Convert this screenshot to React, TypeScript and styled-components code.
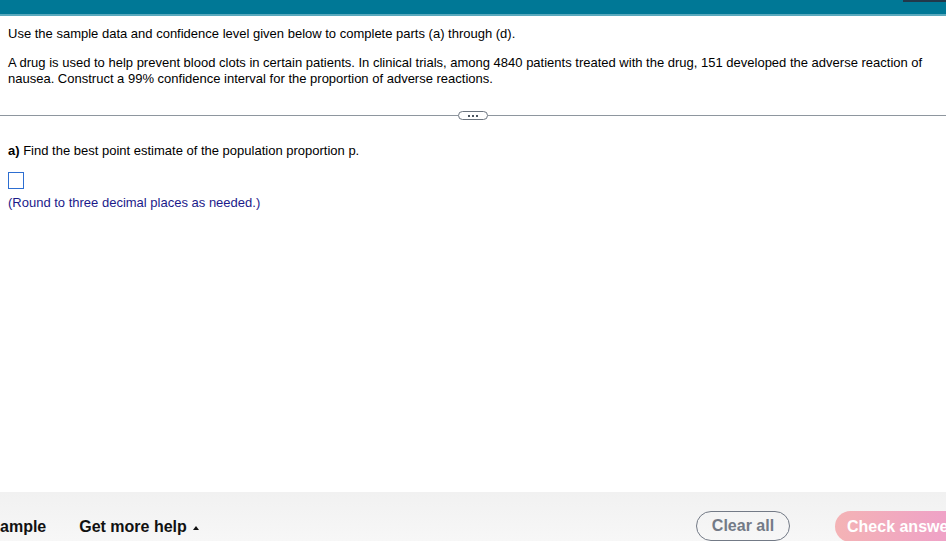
import styled, { createGlobalStyle } from "styled-components";

const Global = createGlobalStyle`
  html, body {
    margin: 0;
    padding: 0;
    background: #fff;
    font-family: "Liberation Sans", Arial, sans-serif;
    overflow: hidden;
  }
`;

const Page = styled.div`
  width: 946px;
  height: 541px;
  display: flex;
  flex-direction: column;
  overflow: hidden;
`;

const TopBar = styled.div`
  height: 14px;
  flex: none;
  background: #007896;
  border-bottom: 2px solid #5aa9bd;
  position: relative;
`;

const TopMark = styled.div`
  position: absolute;
  top: 0;
  left: 903px;
  right: 0;
  height: 2px;
  background: #22384a;
`;

const Content = styled.div`
  flex: 1;
  padding: 10px 8px 0 8px;
  font-size: 13px;
  color: #000;
  line-height: 16px;
`;

const Para = styled.p<{ $mt?: number }>`
  margin: ${(p) => p.$mt ?? 0}px 0 0 0;
`;

const Divider = styled.div`
  margin: 24px -8px 0 -8px;
  display: flex;
  align-items: center;
`;

const Rule = styled.div`
  flex: 1;
  height: 1px;
  background: #8e969e;
`;

const Pill = styled.div`
  width: 28px;
  height: 7px;
  border: 1px solid #6c7580;
  border-radius: 5px;
  display: flex;
  align-items: center;
  justify-content: center;
  gap: 2px;
`;

const Dot = styled.span`
  width: 2px;
  height: 2px;
  background: #4b5560;
`;

const Bold = styled.b`
  font-weight: bold;
`;

const AnswerBox = styled.div`
  width: 14px;
  height: 15px;
  border: 1px solid #2d6ed1;
  margin-top: 13px;
`;

const Hint = styled.div`
  color: #1b1a8a;
  margin-top: 6px;
`;

const Footer = styled.div`
  height: 49px;
  flex: none;
  background: linear-gradient(#f1f1f1, #f7f7f7);
  display: flex;
  align-items: flex-start;
  padding-top: 19px;
  box-sizing: border-box;
  font-size: 16px;
  font-weight: bold;
  color: #111;
`;

const FooterLink = styled.span<{ $ml: number }>`
  margin-left: ${(p) => p.$ml}px;
  height: 31px;
  display: flex;
  align-items: center;
  gap: 6px;
  white-space: nowrap;
`;

const Caret = styled.span`
  width: 0;
  height: 0;
  border-left: 3.5px solid transparent;
  border-right: 3.5px solid transparent;
  border-bottom: 4px solid #111;
  margin-top: 2px;
`;

const OutlineButton = styled.div`
  margin-left: auto;
  width: 92px;
  height: 28px;
  box-sizing: content-box;
  border: 1.5px solid #737a86;
  border-radius: 16px;
  display: flex;
  align-items: center;
  justify-content: center;
  color: #737a86;
  font-size: 16px;
  flex: none;
`;

const FillButton = styled.div`
  margin-left: 45px;
  width: 130px;
  margin-right: -19px;
  height: 31px;
  border-radius: 16px;
  background: linear-gradient(90deg, #f4b3b5, #ee9fca);
  color: #fff;
  display: flex;
  align-items: center;
  padding-left: 12px;
  box-sizing: border-box;
  white-space: nowrap;
  flex: none;
`;

export default function App() {
  return (
    <Page>
      <Global />
      <TopBar>
        <TopMark />
      </TopBar>
      <Content>
        <Para>Use the sample data and confidence level given below to complete parts (a) through (d).</Para>
        <Para $mt={13}>
          A drug is used to help prevent blood clots in certain patients. In clinical trials, among 4840 patients treated with the drug, 151 developed the adverse reaction of
          nausea. Construct a 99% confidence interval for the proportion of adverse reactions.
        </Para>
        <Divider>
          <Rule />
          <Pill>
            <Dot />
            <Dot />
            <Dot />
          </Pill>
          <Rule />
        </Divider>
        <Para $mt={23}>
          <Bold>a)</Bold> Find the best point estimate of the population proportion p.
        </Para>
        <AnswerBox />
        <Hint>(Round to three decimal places as needed.)</Hint>
      </Content>
      <Footer>
        <FooterLink $ml={0}>ample</FooterLink>
        <FooterLink $ml={33}>
          Get more help <Caret />
        </FooterLink>
        <OutlineButton>Clear all</OutlineButton>
        <FillButton>Check answer</FillButton>
      </Footer>
    </Page>
  );
}
